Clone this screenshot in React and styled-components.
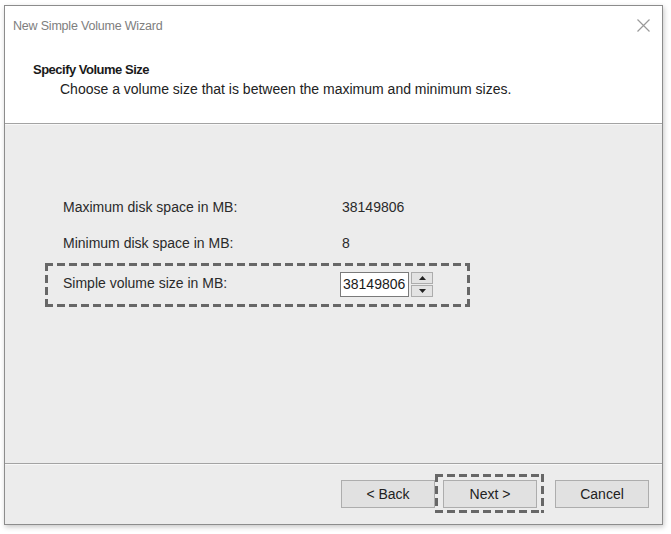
import React from "react";
import styled, { createGlobalStyle, css } from "styled-components";

const Global = createGlobalStyle`
  html, body { margin: 0; padding: 0; background: #ffffff; }
  body { font-family: "Liberation Sans", Arial, sans-serif; }
  * { box-sizing: border-box; }
`;

const dashed = css`
  background:
    repeating-linear-gradient(90deg, #676767 0 8px, transparent 8px 12px) left top / 100% 3px no-repeat,
    repeating-linear-gradient(90deg, #676767 0 8px, transparent 8px 12px) left bottom / 100% 3px no-repeat,
    repeating-linear-gradient(180deg, #676767 0 8px, transparent 8px 12px) left top / 3px 100% no-repeat,
    repeating-linear-gradient(180deg, #676767 0 8px, transparent 8px 12px) right top / 3px 100% no-repeat;
`;

const Page = styled.div`
  width: 671px;
  height: 534px;
  padding: 5px 0 0 4px;
`;

const Window = styled.div`
  width: 659px;
  height: 520px;
  border: 1px solid #8c8c8c;
  background: #ececec;
  display: flex;
  flex-direction: column;
  box-shadow: 1px 2px 5px rgba(0, 0, 0, 0.22);
`;

const Header = styled.div`
  height: 118px;
  background: #ffffff;
  border-bottom: 1px solid #a3a3a3;
  box-shadow: 0 1px 0 #f8f8f8;
  display: flex;
  flex-direction: column;
`;

const TitleBar = styled.div`
  height: 39px;
  display: flex;
  align-items: center;
  justify-content: space-between;
  padding: 0 12px 0 8px;
  color: #7e7e7e;
  font-size: 12.5px;
  letter-spacing: -0.2px;
`;

const CloseIcon = styled.svg`
  width: 13px;
  height: 13px;
  display: block;
`;

const Heading = styled.div`
  margin-top: 17px;
  padding-left: 28px;
  font-size: 13px;
  font-weight: bold;
  letter-spacing: -0.5px;
  color: #1a1a1a;
  line-height: 16px;
`;

const Subheading = styled.div`
  margin-top: 3px;
  padding-left: 55px;
  font-size: 14px;
  color: #222;
  line-height: 16px;
`;

const Content = styled.div`
  flex: 1;
  padding: 65px 0 0 40px;
  display: flex;
  flex-direction: column;
`;

const Row = styled.div`
  height: 36px;
  display: grid;
  grid-template-columns: 279px auto;
  align-items: center;
  padding-left: 18px;
  font-size: 14px;
  color: #2a2a2a;
`;

const FocusRow = styled.div`
  ${dashed};
  margin-top: 2px;
  width: 425px;
  height: 44px;
  display: grid;
  grid-template-columns: 277px auto;
  align-items: center;
  padding: 0 3px 0 18px;
  font-size: 14px;
  color: #2a2a2a;
`;

const LabelText = styled.span`
  margin-top: -4px;
`;

const Spin = styled.div`
  display: flex;
  align-items: center;
  gap: 2px;
  margin-top: -2px;
`;

const NumberBox = styled.div`
  width: 69px;
  height: 25px;
  background: #ffffff;
  border: 1px solid #7a7a7a;
  display: flex;
  align-items: center;
  padding-left: 2px;
  font-size: 14px;
  color: #1a1a1a;
`;

const Arrows = styled.div`
  width: 22px;
  height: 25px;
  display: flex;
  flex-direction: column;
  gap: 1px;
`;

const ArrowBtn = styled.div`
  flex: 1;
  background: #e3e3e3;
  border: 1px solid #acacac;
  display: flex;
  align-items: center;
  justify-content: center;
`;

const Footer = styled.div`
  height: 61px;
  border-top: 1px solid #a3a3a3;
  box-shadow: inset 0 1px 0 #f8f8f8;
  display: flex;
  align-items: center;
  justify-content: flex-end;
  padding: 0 13px 0 0;
`;

const Button = styled.div`
  width: 94px;
  height: 28px;
  background: #e1e1e1;
  border: 1px solid #adadad;
  display: flex;
  align-items: center;
  justify-content: center;
  font-size: 14px;
  color: #222;
`;

const FocusRing = styled.div`
  ${dashed};
  padding: 6px 7px 5px 8px;
  margin-top: -1px;
`;

const CancelButton = styled(Button)`
  margin-left: 11px;
`;

const Tri = ({ down }) => (
  <svg width="7" height="4" viewBox="0 0 7 4">
    <path d={down ? "M0 0 L7 0 L3.5 4 Z" : "M0 4 L7 4 L3.5 0 Z"} fill="#222" />
  </svg>
);

export default function App() {
  return (
    <Page>
      <Global />
      <Window>
        <Header>
          <TitleBar>
            <span>New Simple Volume Wizard</span>
            <CloseIcon viewBox="0 0 13 13">
              <path d="M0.5 0.5 L12.5 12.5 M12.5 0.5 L0.5 12.5" stroke="#9a9a9a" strokeWidth="1.2" fill="none" />
            </CloseIcon>
          </TitleBar>
          <Heading>Specify Volume Size</Heading>
          <Subheading>Choose a volume size that is between the maximum and minimum sizes.</Subheading>
        </Header>
        <Content>
          <Row>
            <span>Maximum disk space in MB:</span>
            <span>38149806</span>
          </Row>
          <Row>
            <span>Minimum disk space in MB:</span>
            <span>8</span>
          </Row>
          <FocusRow>
            <LabelText>Simple volume size in MB:</LabelText>
            <Spin>
              <NumberBox>38149806</NumberBox>
              <Arrows>
                <ArrowBtn><Tri /></ArrowBtn>
                <ArrowBtn><Tri down /></ArrowBtn>
              </Arrows>
            </Spin>
          </FocusRow>
        </Content>
        <Footer>
          <Button>&lt; Back</Button>
          <FocusRing>
            <Button>Next &gt;</Button>
          </FocusRing>
          <CancelButton>Cancel</CancelButton>
        </Footer>
      </Window>
    </Page>
  );
}
